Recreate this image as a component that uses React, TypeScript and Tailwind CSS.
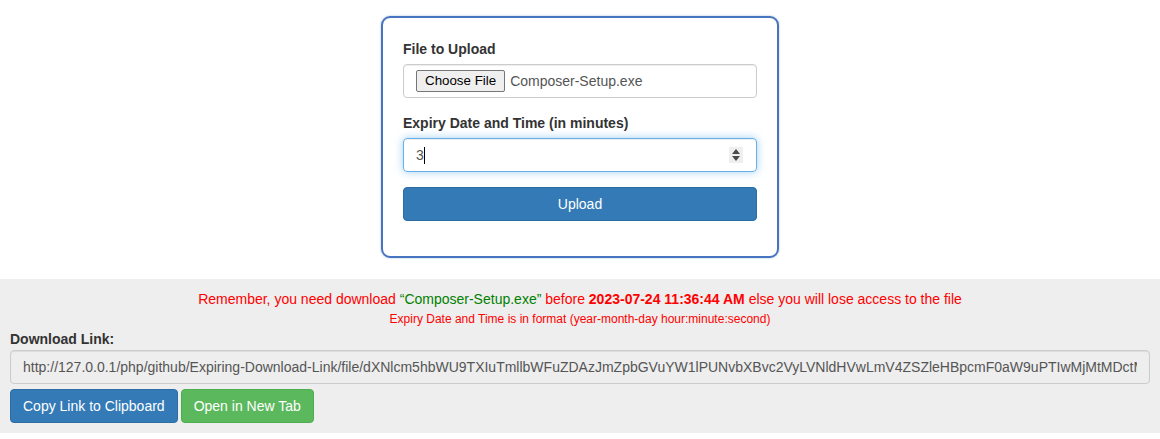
import React from "react";

const link =
    "http://127.0.0.1/php/github/Expiring-Download-Link/file/dXNlcm5hbWU9TXIuTmllbWFuZDAzJmZpbGVuYW1lPUNvbXBvc2VyLVNldHVwLmV4ZSZleHBpcmF0aW9uPTIwMjMtMDctMjQgMTE6MzY6NDQ=";

const Spinner = () => (
    <div className="w-[14px] h-[16px] bg-[#efefef] flex flex-col items-center justify-center gap-[2px]">
        <svg width="8" height="5" viewBox="0 0 8 5">
            <path d="M4 0 L8 5 L0 5 Z" fill="#4a4a4a" />
        </svg>
        <svg width="8" height="5" viewBox="0 0 8 5">
            <path d="M0 0 L8 0 L4 5 Z" fill="#4a4a4a" />
        </svg>
    </div>
);

export default function App() {
    return (
        <div className="w-full min-h-[439px] bg-white text-[14px] leading-[20px] text-[#333]" style={{ fontFamily: '"Liberation Sans", Arial, sans-serif' }}>
            {/* upload form */}
            <div className="h-[279px] pt-[16px] flex justify-center">
                <div className="w-[398px] h-[242px] border-2 border-[#4674bf] rounded-[9px] px-[20px] pt-[21px] shadow-[0_0_2px_rgba(70,116,191,0.5)]">
                    <div className="mb-[15px]">
                        <label className="block font-bold mb-[5px]">File to Upload</label>
                        <div className="h-[34px] border border-[#ccc] rounded-[4px] px-[12px] flex items-center shadow-[inset_0_1px_1px_rgba(0,0,0,0.075)]">
                            <span className="h-[22px] px-[8px] border border-[#767676] rounded-[2px] bg-[#efefef] text-[13.33px] leading-[20px] text-black flex items-center">
                                Choose File
                            </span>
                            <span className="ml-[5px] text-[#555]">Composer-Setup.exe</span>
                        </div>
                    </div>
                    <div className="mb-[15px]">
                        <label className="block font-bold mb-[5px]">Expiry Date and Time (in minutes)</label>
                        <div className="h-[34px] border border-[#66afe9] rounded-[4px] pl-[12px] pr-[13px] flex items-center justify-between shadow-[inset_0_1px_1px_rgba(0,0,0,0.075),0_0_8px_rgba(102,175,233,0.6)]">
                            <span className="text-[#555] flex items-center">
                                3<span className="inline-block w-px h-[17px] bg-black" />
                            </span>
                            <Spinner />
                        </div>
                    </div>
                    <button className="w-full h-[34px] bg-[#337ab7] border border-[#2e6da4] rounded-[4px] text-white">
                        Upload
                    </button>
                </div>
            </div>

            {/* result */}
            <div className="bg-[#eee] px-[10px] pt-[10px] pb-[10px]">
                <div className="text-center text-[#ff0000]">
                    Remember, you need download{" "}
                    <span className="text-[#008000]">“Composer-Setup.exe”</span> before{" "}
                    <b>2023-07-24 11:36:44 AM</b> else you will lose access to the file
                </div>
                <div className="text-center text-[#ff0000] text-[12px] leading-[17px] mt-[2px]">
                    Expiry Date and Time is in format (year-month-day hour:minute:second)
                </div>
                <label className="block font-bold mt-[1px] mb-[1px]">Download Link:</label>
                <input
                    readOnly
                    value={link}
                    className="w-full h-[34px] px-[12px] bg-[#eee] border border-[#ccc] rounded-[4px] text-[#555] outline-none shadow-[inset_0_1px_1px_rgba(0,0,0,0.075)]"
                />
                <div className="flex gap-[3px] mt-[5px]">
                    <button className="h-[34px] px-[12px] bg-[#337ab7] border border-[#2e6da4] rounded-[4px] text-white">
                        Copy Link to Clipboard
                    </button>
                    <button className="h-[34px] px-[12px] bg-[#5cb85c] border border-[#4cae4c] rounded-[4px] text-white">
                        Open in New Tab
                    </button>
                </div>
            </div>
        </div>
    );
}
